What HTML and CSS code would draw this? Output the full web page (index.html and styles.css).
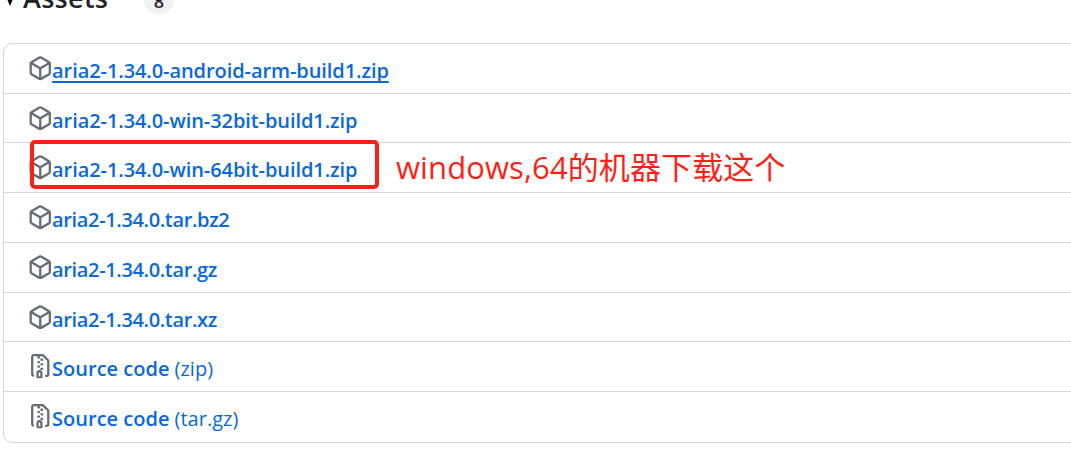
FILE: index.html
```
<!DOCTYPE html>
<html lang="en">
<head>
    <meta charset="UTF-8">
    <meta name="viewport" content="width=device-width, initial-scale=1.0">
    <title>Assets</title>
    <link rel="stylesheet" href="styles.css">
</head>
<body>
    <!-- icon shapes shared by the rows -->
    <svg class="defs">
        <symbol id="package" viewBox="0 0 16 16"><path d="m8.878.392 5.25 3.045c.54.314.872.89.872 1.514v6.098a1.75 1.75 0 0 1-.872 1.514l-5.25 3.045a1.75 1.75 0 0 1-1.756 0l-5.25-3.045A1.75 1.75 0 0 1 1 11.049V4.951c0-.624.332-1.201.872-1.514L7.122.392a1.75 1.75 0 0 1 1.756 0ZM7.875 1.69l-4.63 2.685L8 7.133l4.755-2.758-4.63-2.685a.248.248 0 0 0-.25 0ZM2.5 5.677v5.372c0 .09.047.171.125.216l4.625 2.683V8.432Zm6.25 8.271 4.625-2.683a.25.25 0 0 0 .125-.216V5.677L8.75 8.432Z"/></symbol>
        <symbol id="file-zip" viewBox="0 0 16 16"><path d="M3.5 1.75v11.5c0 .09.048.173.126.217a.75.75 0 0 1-.752 1.298A1.748 1.748 0 0 1 2 13.25V1.75C2 .784 2.784 0 3.75 0h5.586c.464 0 .909.185 1.237.513l2.914 2.914c.329.328.513.773.513 1.237v8.586A1.75 1.75 0 0 1 12.25 15h-.5a.75.75 0 0 1 0-1.5h.5a.25.25 0 0 0 .25-.25V4.664a.25.25 0 0 0-.073-.177L9.513 1.573a.25.25 0 0 0-.177-.073H7.25a.75.75 0 0 1 0 1.5h-.5a.75.75 0 0 1 0-1.5h-3a.25.25 0 0 0-.25.25Zm3.75 8.75h.5c.966 0 1.75.784 1.75 1.75v3a.75.75 0 0 1-.75.75h-2.5a.75.75 0 0 1-.75-.75v-3c0-.966.784-1.75 1.75-1.75ZM6 5.25a.75.75 0 0 1 .75-.75h.5a.75.75 0 0 1 0 1.5h-.5A.75.75 0 0 1 6 5.25Zm.75 2.25h.5a.75.75 0 0 1 0 1.5h-.5a.75.75 0 0 1 0-1.5ZM8 6.75A.75.75 0 0 1 8.75 6h.5a.75.75 0 0 1 0 1.5h-.5A.75.75 0 0 1 8 6.75ZM8.75 3h.5a.75.75 0 0 1 0 1.5h-.5a.75.75 0 0 1 0-1.5ZM8 9.75A.75.75 0 0 1 8.75 9h.5a.75.75 0 0 1 0 1.5h-.5A.75.75 0 0 1 8 9.75Zm-1 2.5v2.25h1v-2.25a.25.25 0 0 0-.25-.25h-.5a.25.25 0 0 0-.25.25Z"/></symbol>
    </svg>
    <div class="head">
        <svg class="arrow" viewBox="0 0 10 12"><path d="M0 0h10L5 12z"/></svg>
        <h3>Assets</h3>
        <span class="count">8</span>
    </div>
    <ul class="assets">
        <li><svg class="icon"><use href="#package"/></svg><a class="name hover" href="#">aria2-1.34.0-android-arm-build1.zip</a></li>
        <li><svg class="icon"><use href="#package"/></svg><a class="name" href="#">aria2-1.34.0-win-32bit-build1.zip</a></li>
        <li><svg class="icon"><use href="#package"/></svg><a class="name" href="#">aria2-1.34.0-win-64bit-build1.zip</a>
            <div class="mark"></div>
            <p class="note">windows,64的机器下载这个</p>
        </li>
        <li><svg class="icon"><use href="#package"/></svg><a class="name tar" href="#">aria2-1.34.0.tar.bz2</a></li>
        <li><svg class="icon"><use href="#package"/></svg><a class="name tar" href="#">aria2-1.34.0.tar.gz</a></li>
        <li><svg class="icon"><use href="#package"/></svg><a class="name tar" href="#">aria2-1.34.0.tar.xz</a></li>
        <li><svg class="icon"><use href="#file-zip"/></svg><a class="name source" href="#">Source code <span>(zip)</span></a></li>
        <li><svg class="icon"><use href="#file-zip"/></svg><a class="name source" href="#">Source code <span>(tar.gz)</span></a></li>
    </ul>
</body>
</html>
```
FILE: styles.css
```
*{
    margin:0;
    padding:0;
    box-sizing:border-box;
}
body{
    height:455px;
    overflow:hidden;
    background:#fff;
    color:#1f2328;
    font-family:"Open Sans","Noto Sans CJK SC",sans-serif;
}
.defs{
    display:none;
}
.head{
    display:flex;
    align-items:center;
    height:36px;
    margin-top:-19px;
    padding-left:5px;
}
.arrow{
    width:10px;
    height:12px;
    margin-top:1px;
}
.head h3{
    width:86px;
    margin-left:8px;
    margin-top:-3px;
    font-size:27px;
    font-weight:600;
    letter-spacing:0.3px;
    line-height:36px;
    white-space:nowrap;
}
.count{
    width:30px;
    height:30px;
    margin-left:35px;
    margin-top:2px;
    border-radius:15px;
    background:#eff1f3;
    font-size:18px;
    font-weight:600;
    line-height:32px;
    text-align:center;
}
.assets{
    width:1080px;
    height:400px;
    margin:26px 0 0 3px;
    border:1px solid #d0d7de;
    border-radius:9px;
    list-style:none;
}
.assets li{
    display:flex;
    position:relative;
    height:49.75px;
    padding:12px 0 0 23.6px;
}
.assets li:first-child{
    height:48.6px;
}
.assets li + li{
    border-top:1px solid #d0d7de;
}
.icon{
    flex:none;
    width:24.5px;
    height:24.5px;
    fill:#656d76;
}
.name{
    height:26px;
    margin-top:1px;
    color:#0969da;
    font-size:20px;
    font-weight:600;
    letter-spacing:-0.08px;
    line-height:28px;
    text-decoration:none;
    white-space:nowrap;
}
.tar{
    letter-spacing:-0.36px;
}
.source{
    letter-spacing:0;
}
.name span{
    font-weight:400;
}
.hover{
    text-decoration:underline;
    text-decoration-thickness:2px;
    text-underline-offset:3px;
    text-decoration-skip-ink:none;
}
/* hand drawn frame and remark over the 64bit row */
.mark{
    position:absolute;
    top:-3px;
    left:26px;
    width:349px;
    height:49px;
    border:4px solid #ff1f17;
    border-radius:5px;
}
.note{
    position:absolute;
    top:1px;
    left:392px;
    color:#ff1f17;
    font-size:31px;
    letter-spacing:0.1px;
    line-height:46px;
    white-space:nowrap;
}
```
